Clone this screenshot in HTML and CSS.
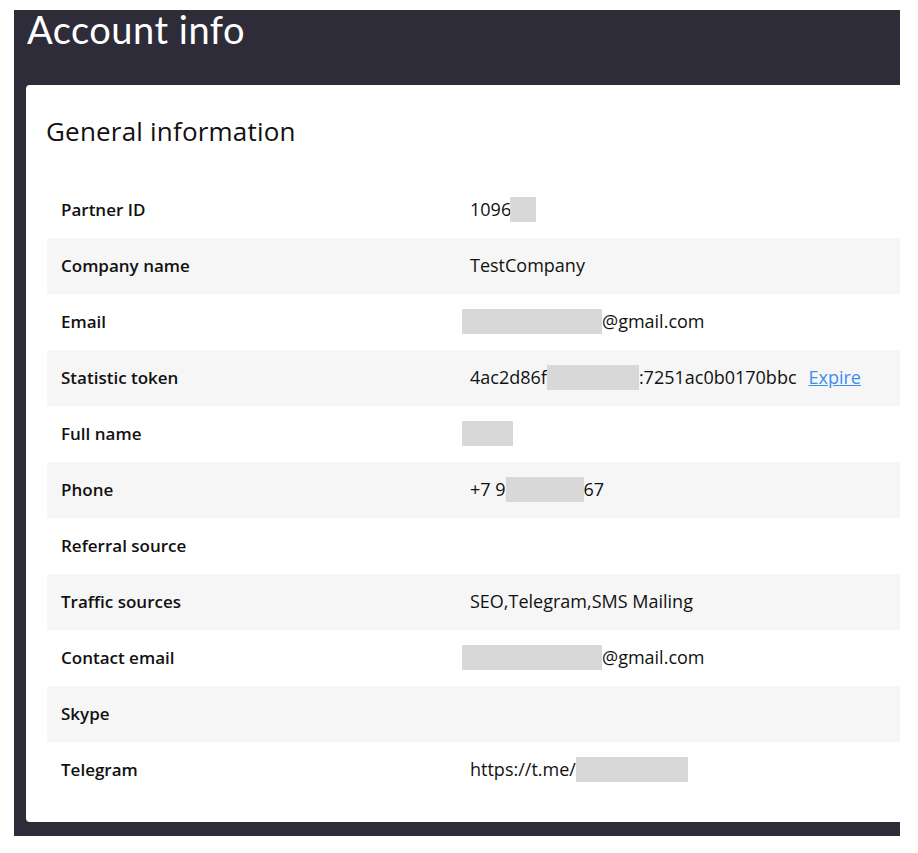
FILE: index.html
```html
<!DOCTYPE html>
<html lang="en">
<head>
<meta charset="utf-8">
<title>Account info</title>
<link rel="stylesheet" href="styles.css">
</head>
<body>
<div class="panel">
  <h1 class="page-title">Account info</h1>
  <section class="card">
    <h2 class="card-title">General information</h2>
    <div class="info-table">
      <div class="row"><div class="label">Partner ID</div><div class="value">1096<span class="redact r-pid"></span></div></div>
      <div class="row alt"><div class="label">Company name</div><div class="value">TestCompany</div></div>
      <div class="row"><div class="label">Email</div><div class="value"><span class="redact r-lead r-email"></span>@gmail.com</div></div>
      <div class="row alt"><div class="label">Statistic token</div><div class="value">4ac2d86f<span class="redact r-token"></span>:7251ac0b0170bbc<a class="expire" href="#">Expire</a></div></div>
      <div class="row"><div class="label">Full name</div><div class="value"><span class="redact r-lead r-name"></span></div></div>
      <div class="row alt"><div class="label">Phone</div><div class="value">+7 9<span class="redact r-phone"></span>67</div></div>
      <div class="row"><div class="label">Referral source</div><div class="value"></div></div>
      <div class="row alt"><div class="label">Traffic sources</div><div class="value">SEO,Telegram,SMS Mailing</div></div>
      <div class="row"><div class="label">Contact email</div><div class="value"><span class="redact r-lead r-email"></span>@gmail.com</div></div>
      <div class="row alt"><div class="label">Skype</div><div class="value"></div></div>
      <div class="row"><div class="label">Telegram</div><div class="value">https://t.me/<span class="redact r-tg"></span></div></div>
    </div>
  </section>
</div>
</body>
</html>
```

FILE: styles.css
```css
* { box-sizing: border-box; }
html, body { margin: 0; padding: 0; background: #ffffff; }
body {
  font-family: "Open Sans", "Noto Sans", "Liberation Sans", sans-serif;
  color: #111111;
  padding: 10px 18px 17px 14px;
}
.panel {
  background: #2e2c38;
  width: 886px;
  height: 826px;
  padding: 0 0 14px 12px;
  display: flex;
  flex-direction: column;
}
.page-title {
  margin: 0;
  height: 75px;
  padding-left: 1px;
  color: #ffffff;
  font-family: Lato, "Open Sans", sans-serif;
  font-weight: 400;
  font-size: 38px;
  letter-spacing: 0.5px;
  line-height: 38px;
}
.card {
  background: #ffffff;
  border-radius: 4px 0 0 4px;
  padding: 0 0 22px 20px;
  flex: 1;
}
.card-title {
  margin: 0;
  padding-top: 30px;
  height: 97px;
  font-weight: 400;
  font-size: 26px;
  letter-spacing: 0.2px;
  line-height: 32px;
  color: #111111;
}
.info-table { display: flex; flex-direction: column; margin-left: 1px; }
.row {
  display: grid;
  grid-template-columns: 409px 1fr;
  height: 56px;
  align-items: center;
  padding-bottom: 2px;
}
.row.alt { background: #f6f6f6; }
.label { padding-left: 14px; font-weight: 600; font-size: 17px; }
.value {
  padding-left: 14px;
  display: flex;
  align-items: center;
  white-space: nowrap;
  font-size: 18px;
}
.redact {
  display: inline-block;
  background: #d8d8d8;
  height: 25px;
}
.r-lead { margin-left: -8px; }
.r-pid { width: 26px; margin-left: -1px; }
.r-email { width: 140px; }
.r-token { width: 92px; }
.r-name { width: 51px; }
.r-phone { width: 78px; }
.r-tg { width: 112px; }
.expire {
  color: #3d8ef0;
  text-decoration: underline;
  margin-left: 12px;
}
```
